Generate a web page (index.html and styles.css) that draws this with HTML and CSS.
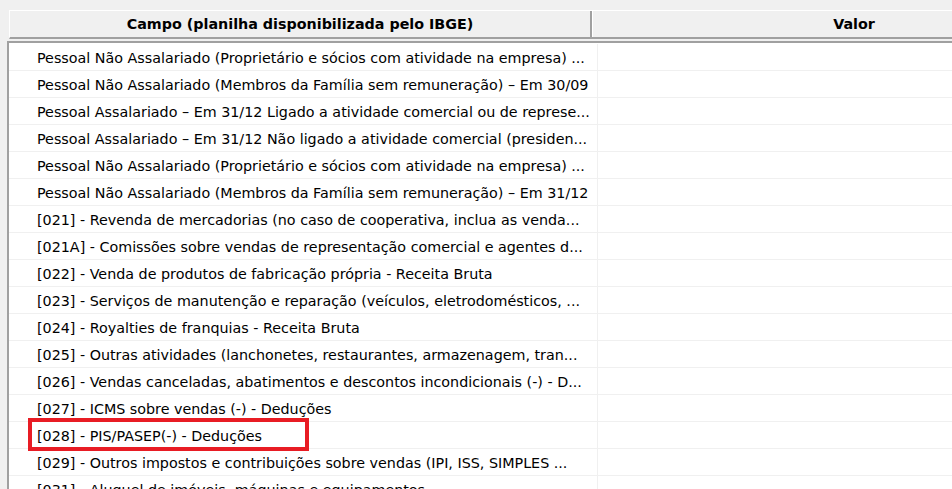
FILE: index.html
```html
<!DOCTYPE html>
<html lang="pt-BR">
<head>
    <meta charset="UTF-8">
    <title>Campos IBGE</title>
    <link rel="stylesheet" href="styles.css">
</head>
<body>
    <div class="panel">
        <div class="grid-head">
            <div class="head-cell head-campo">Campo (planilha disponibilizada pelo IBGE)</div>
            <div class="head-cell head-valor">Valor</div>
        </div>

        <div class="grid">
            <div class="row"><div class="cell campo">Pessoal Não Assalariado (Proprietário e sócios com atividade na empresa) ...</div><div class="cell valor"></div></div>
            <div class="row"><div class="cell campo">Pessoal Não Assalariado (Membros da Família sem remuneração) – Em 30/09</div><div class="cell valor"></div></div>
            <div class="row"><div class="cell campo">Pessoal Assalariado – Em 31/12 Ligado a atividade comercial ou de represe...</div><div class="cell valor"></div></div>
            <div class="row"><div class="cell campo">Pessoal Assalariado – Em 31/12 Não ligado a atividade comercial (presiden...</div><div class="cell valor"></div></div>
            <div class="row"><div class="cell campo">Pessoal Não Assalariado (Proprietário e sócios com atividade na empresa) ...</div><div class="cell valor"></div></div>
            <div class="row"><div class="cell campo">Pessoal Não Assalariado (Membros da Família sem remuneração) – Em 31/12</div><div class="cell valor"></div></div>
            <div class="row"><div class="cell campo">[021] - Revenda de mercadorias (no caso de cooperativa, inclua as venda...</div><div class="cell valor"></div></div>
            <div class="row"><div class="cell campo">[021A] - Comissões sobre vendas de representação comercial e agentes d...</div><div class="cell valor"></div></div>
            <div class="row"><div class="cell campo">[022] - Venda de produtos de fabricação própria - Receita Bruta</div><div class="cell valor"></div></div>
            <div class="row"><div class="cell campo">[023] - Serviços de manutenção e reparação (veículos, eletrodomésticos, ...</div><div class="cell valor"></div></div>
            <div class="row"><div class="cell campo">[024] - Royalties de franquias - Receita Bruta</div><div class="cell valor"></div></div>
            <div class="row"><div class="cell campo">[025] - Outras atividades (lanchonetes, restaurantes, armazenagem, tran...</div><div class="cell valor"></div></div>
            <div class="row"><div class="cell campo">[026] - Vendas canceladas, abatimentos e descontos incondicionais (-) - D...</div><div class="cell valor"></div></div>
            <div class="row"><div class="cell campo">[027] - ICMS sobre vendas (-) - Deduções</div><div class="cell valor"></div></div>
            <div class="row marked">
                <div class="cell campo">[028] - PIS/PASEP(-) - Deduções</div><div class="cell valor"></div>
                <!-- destaque em vermelho -->
                <div class="highlight"></div>
            </div>
            <div class="row"><div class="cell campo">[029] - Outros impostos e contribuições sobre vendas (IPI, ISS, SIMPLES ...</div><div class="cell valor"></div></div>
            <div class="row"><div class="cell campo">[031] - Aluguel de imóveis, máquinas e equipamentos</div><div class="cell valor"></div></div>
        </div>
    </div>
</body>
</html>
```

FILE: styles.css
```css
html, body {
    height: 100%;
}

body {
    margin: 0;
    background-color: #f0f0f0;
    color: #000000;
    font-family: 'DejaVu Sans', sans-serif;
    font-size: 14.3px;
    overflow: hidden;
}

.panel {
    padding-top: 10px;
    width: 1200px;
}

/* Cabeçalho das colunas */
.grid-head {
    display: flex;
    margin-left: 9px;
    height: 26px;
    border-top: 1px solid #ffffff;
    border-left: 1px solid #ffffff;
    border-bottom: 2px solid #a0a0a0;
    margin-bottom: 2px;
}

.head-cell {
    font-weight: bold;
    text-align: center;
    line-height: 27px;
    white-space: nowrap;
}

.head-campo {
    width: 580px;
    border-right: 2px solid #a0a0a0;
}

.head-valor {
    width: 522px;
    border-left: 1px solid #ffffff;
}

/* Grade de dados */
.grid {
    margin-left: 7px;
    padding-top: 1px;
    border-top: 2px solid #a0a0a0;
    border-left: 2px solid #a0a0a0;
    background-color: #ffffff;
}

.row {
    display: flex;
    height: 26px;
    border-bottom: 1px solid #f0f0f0;
}

.cell {
    padding-top: 2px;
    line-height: 24px;
    white-space: nowrap;
    overflow: hidden;
}

.campo {
    width: 560px;
    padding-left: 28px;
    border-right: 1px solid #f0f0f0;
}

.valor {
    width: 522px;
}

.marked {
    position: relative;
}

.highlight {
    position: absolute;
    left: 19px;
    top: -4px;
    width: 281px;
    height: 33px;
    box-sizing: border-box;
    border: 4px solid #e81c24;
}
```
